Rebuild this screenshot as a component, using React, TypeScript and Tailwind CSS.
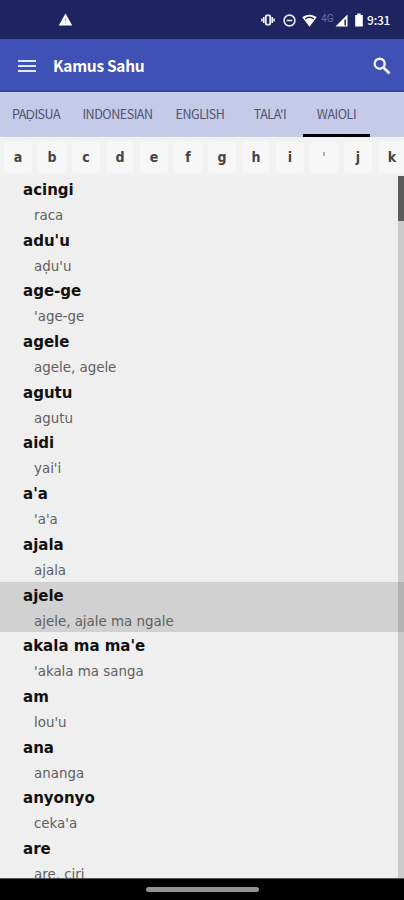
import React from 'react';

interface Entry {
  word: string;
  gloss: string;
}

const tabs = [
  { label: 'PAḌISUA', className: 'w-[72px]' },
  { label: 'INDONESIAN', className: 'w-[91px]' },
  { label: 'ENGLISH', className: 'w-[74px]' },
  { label: "TALA'I", className: 'w-[66px]' },
  { label: 'WAIOLI', className: 'w-[67px]' },
];

const letters = ['a', 'b', 'c', 'd', 'e', 'f', 'g', 'h', 'i', "'", 'j', 'k'];

const entries: Entry[] = [
  { word: 'acingi', gloss: 'raca' },
  { word: "adu'u", gloss: "aḍu'u" },
  { word: 'age-ge', gloss: "'age-ge" },
  { word: 'agele', gloss: 'agele, agele' },
  { word: 'agutu', gloss: 'agutu' },
  { word: 'aidi', gloss: "yai'i" },
  { word: "a'a", gloss: "'a'a" },
  { word: 'ajala', gloss: 'ajala' },
  { word: 'ajele', gloss: 'ajele, ajale ma ngale' },
  { word: "akala ma ma'e", gloss: "'akala ma sanga" },
  { word: 'am', gloss: "lou'u" },
  { word: 'ana', gloss: 'ananga' },
  { word: 'anyonyo', gloss: "ceka'a" },
  { word: 'are', gloss: 'are, ciri' },
];

const StatusBar: React.FC = () => (
  <div className="flex h-[39px] shrink-0 items-center bg-[#1e2460] pt-px text-white">
    <svg className="mb-px ml-[58px] h-[13px] w-[15px]" viewBox="0 0 15 13">
      <path d="M7.5 0.5 14.3 12.5H0.7Z" fill="#fff" />
      <path d="M7.5 5v3.2M7.5 9.2v1.4" stroke="#a3a5c0" strokeWidth="1.3" />
    </svg>
    <div className="ml-auto flex items-center pr-[14px]">
      <svg className="mr-[8px] h-3 w-[14px]" viewBox="0 0 14 12" fill="none" stroke="#e9eaf5">
        <rect x="4.8" y="1.4" width="4.4" height="9.2" rx="1" strokeWidth="1.9" />
        <path d="M2.8 2.9v6.2M11.2 2.9v6.2" strokeWidth="1.6" />
        <path d="M1 4.5v3M13 4.5v3" strokeWidth="1.6" />
      </svg>
      <svg className="mr-[6px] h-[13px] w-[13px]" viewBox="0 0 13 13" fill="none" stroke="#e9eaf5" strokeWidth="1.6">
        <circle cx="6.5" cy="6.5" r="5.4" />
        <path d="M3.7 6.5h5.6" />
      </svg>
      <svg className="mr-[4px] h-[13px] w-[15px]" viewBox="0 0 15 13">
        <path d="M.3 3.3C4.5-.2 10.5-.2 14.7 3.3L7.5 12.7Z" fill="#fff" />
        <path d="M3.2 4.8c2.7-1.9 5.9-1.9 8.6 0" fill="none" stroke="#1e2460" strokeWidth="1.5" />
      </svg>
      <span className="mr-px mb-[3px] w-[13px] font-['Roboto',sans-serif] text-[10px] leading-none text-[#6c70a0]">4G</span>
      <svg className="mr-[7px] h-[13px] w-[13px]" viewBox="0 0 13 13">
        <path d="M12.5.5v12H.5Z" fill="#fff" />
        <path d="M10.2 5.5v6" stroke="#1e2460" strokeWidth="1.5" />
      </svg>
      <svg className="mr-[4px] h-[14px] w-[8px]" viewBox="0 0 8 14">
        <path d="M2.3.5h3.4v1.4H7.8v11.6H.2V1.9h2.1Z" fill="#fff" />
      </svg>
      <span className="font-['Noto_Sans_CJK_SC',sans-serif] text-[12px] leading-none font-medium tracking-[-0.3px]">9:31</span>
    </div>
  </div>
);

const AppBar: React.FC = () => (
  <header className="flex h-[53px] shrink-0 items-center border-b-2 border-[#3344a8] bg-[#3f51b5] pt-[2px] text-white">
    <button className="ml-[18px] flex w-[18px] flex-col gap-[3px]" aria-label="Menu">
      <span className="h-[2px] w-full bg-[#e3e6f6]" />
      <span className="h-[2px] w-full bg-[#e3e6f6]" />
      <span className="h-[2px] w-full bg-[#e3e6f6]" />
    </button>
    <h1 className="ml-[17px] pt-px font-['Noto_Sans_CJK_SC',sans-serif] text-[15.5px] leading-none font-bold tracking-[-0.3px]">Kamus Sahu</h1>
    <button className="mr-[13px] ml-auto" aria-label="Search">
      <svg className="h-[18px] w-[18px]" viewBox="0 0 18 18" fill="none" stroke="#f3f4fb">
        <circle cx="6.7" cy="6.7" r="5" strokeWidth="2.4" />
        <path d="m10.5 10.5 6 6" strokeWidth="2.8" />
      </svg>
    </button>
  </header>
);

const App: React.FC = () => {
  return (
    <div className="flex h-[900px] w-[404px] flex-col overflow-hidden bg-[#efefef]">
      <StatusBar />
      <AppBar />
      <nav className="flex h-[45px] shrink-0 bg-[#c5cae9]">
        {tabs.map((tab) => (
          <button
            key={tab.label}
            className={`${tab.className} shrink-0 border-b-3 pt-[3px] text-center font-['Noto_Sans_CJK_SC',sans-serif] text-[12.5px] leading-none tracking-[-0.45px] whitespace-nowrap text-[#50536f] ${
              tab.label === 'WAIOLI' ? 'border-black' : 'border-transparent'
            }`}
          >
            {tab.label}
          </button>
        ))}
      </nav>
      <div className="flex h-[39px] shrink-0 gap-[6px] overflow-hidden bg-[#f2f2f2] pt-[5px] pl-[4px]">
        {letters.map((letter) => (
          <button
            key={letter}
            className={`h-[31px] w-[28px] shrink-0 rounded-sm bg-[#f7f7f7] pb-[2px] font-['DejaVu_Sans_Condensed','DejaVu_Sans',sans-serif] text-[14px] leading-none font-bold ${
              letter === "'" ? 'text-[#999]' : 'text-[#444]'
            }`}
          >
            {letter}
          </button>
        ))}
      </div>
      <main className="flex min-h-0 flex-1 overflow-hidden font-['DejaVu_Sans_Condensed','DejaVu_Sans',sans-serif]">
        <ul className="min-w-0 flex-1">
          {entries.map((entry) => (
            <li key={entry.word} className={`h-[50.7px] pl-[23px] ${entry.word === 'ajele' ? '-mr-[6px] bg-[#d1d1d1]' : ''}`}>
              <div className="h-[26px] text-[16.7px] leading-[27px] font-bold text-[#111]">{entry.word}</div>
              <div className="pl-[11px] text-[14.9px] leading-[27px] text-[#606060]">{entry.gloss}</div>
            </li>
          ))}
        </ul>
        <div className="z-10 w-[6px] bg-black/15">
          <div className="h-[45px] bg-[#5c5c5c]" />
        </div>
      </main>
      <footer className="flex h-[22px] shrink-0 items-center justify-center border-t border-[#555] bg-black">
        <div className="h-[5px] w-[113px] rounded-full bg-[#929292]" />
      </footer>
    </div>
  );
};

export default App;
